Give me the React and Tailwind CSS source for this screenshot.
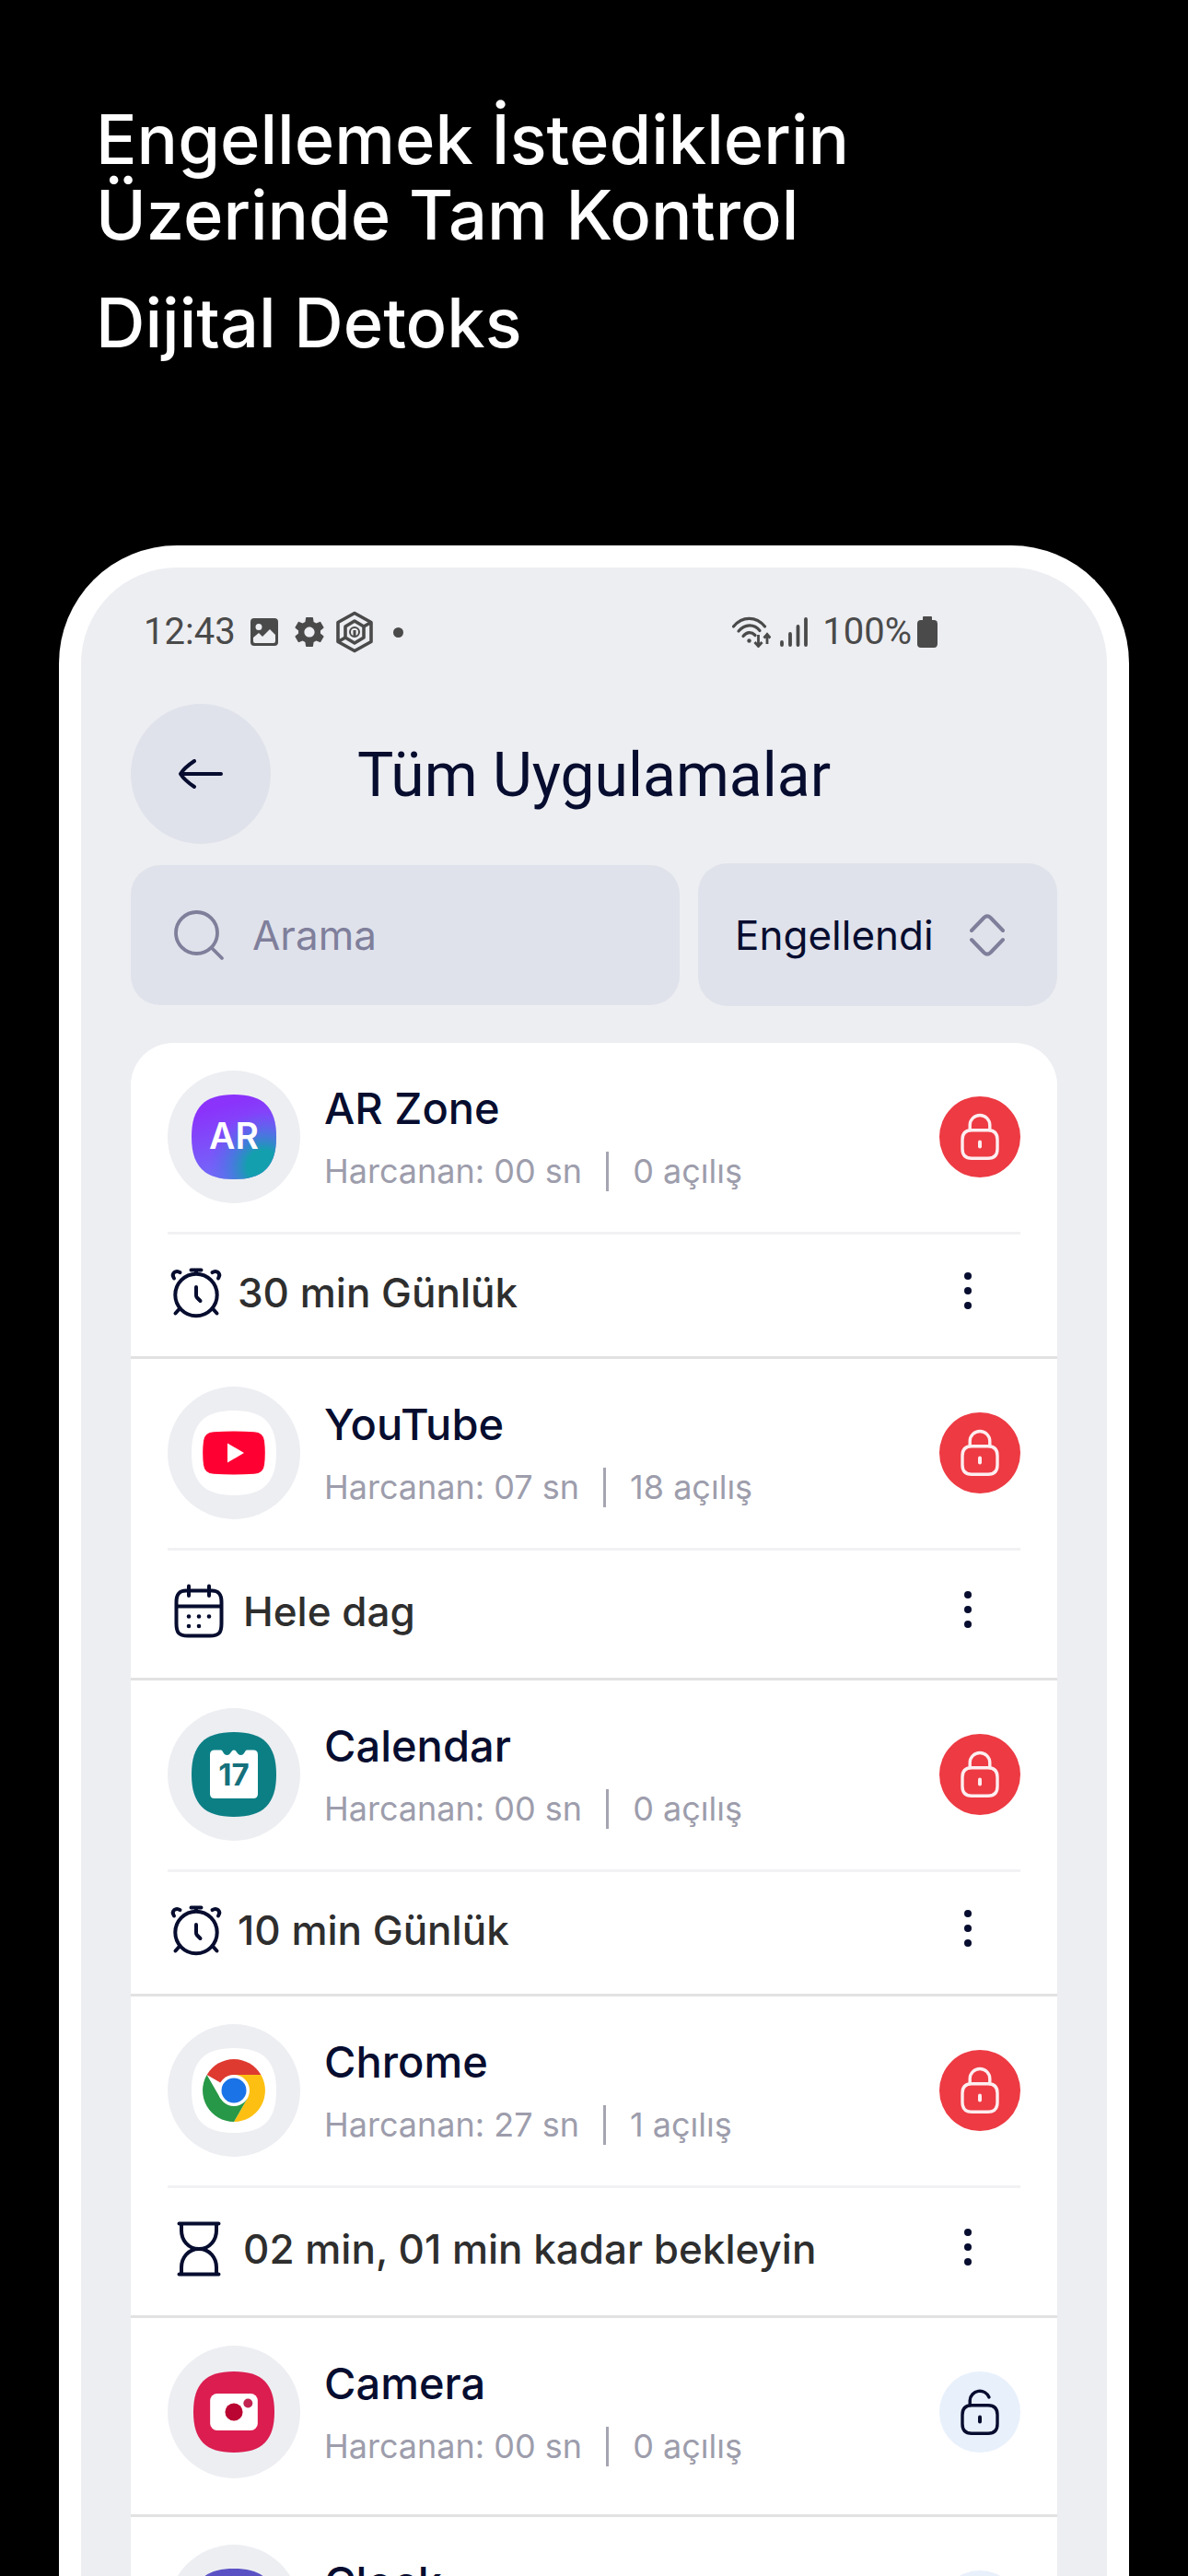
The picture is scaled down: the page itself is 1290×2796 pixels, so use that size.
import React, { useState } from 'react';

const SQUIRCLE = 'M46 0C78 0 92 14 92 46S78 92 46 92 0 78 0 46 14 0 46 0Z';

function ArZoneIcon() {
  return (
    <svg viewBox="0 0 92 92" className="size-[92px]" aria-hidden="true">
      <defs>
        <linearGradient id="ar-base" x1="0.2" y1="0" x2="0.5" y2="1">
          <stop offset="0.15" stopColor="#8b32fb" />
          <stop offset="1" stopColor="#6f70f8" />
        </linearGradient>
        <radialGradient id="ar-teal" cx="0.85" cy="0.85" r="0.65">
          <stop offset="0.3" stopColor="#149fae" />
          <stop offset="0.6" stopColor="#3a80d8" stopOpacity="0.7" />
          <stop offset="1" stopColor="#5a60f0" stopOpacity="0" />
        </radialGradient>
      </defs>
      <path d={SQUIRCLE} fill="url(#ar-base)" />
      <path d={SQUIRCLE} fill="url(#ar-teal)" />
      <text
        x="46"
        y="59"
        textAnchor="middle"
        fill="#fff"
        className="font-['Inter',sans-serif] text-[39px] font-semibold"
      >
        AR
      </text>
    </svg>
  );
}

function YoutubeIcon() {
  return (
    <svg viewBox="0 0 92 92" className="size-[92px]" aria-hidden="true">
      <path d={SQUIRCLE} fill="#fff" />
      <path
        d="M24 23.2Q46 21.6 68 23.2Q78 23.8 79 33Q80.600 46 79 59Q78 68.200 68 68.800Q46 70.400 24 68.800Q14 68.200 13 59Q11.400 46 13 33Q14 23.800 24 23.200Z"
        fill="#ff0033"
      />
      <path d="M39 35.500L57 46L39 56.500Z" fill="#fff" />
    </svg>
  );
}

function CalendarAppIcon() {
  return (
    <svg viewBox="0 0 92 92" className="size-[92px]" aria-hidden="true">
      <path d={SQUIRCLE} fill="#0c7f85" />
      <path
        d="M25 19.500H32C34 19.500 34.500 25 38.500 25S43 19.500 46 19.500S49.500 25 53.500 25S58 19.500 60 19.500H67Q72 19.500 72 24.500V67Q72 72 67 72H25Q20 72 20 67V24.500Q20 19.500 25 19.500Z"
        fill="#fff"
      />
      <text
        x="46"
        y="58"
        textAnchor="middle"
        fill="#15707c"
        className="font-['Inter',sans-serif] text-[33px] font-bold"
      >
        17
      </text>
    </svg>
  );
}

function ChromeIcon() {
  return (
    <svg viewBox="0 0 92 92" className="size-[92px]" aria-hidden="true">
      <path d={SQUIRCLE} fill="#fff" />
      <path d="M46 46L16.600 29A34 34 0 0 1 75.400 29Z" fill="#de3a30" />
      <path d="M46 29H75.400A34 34 0 0 1 46 80L60.700 54.500Z" fill="#fdc012" />
      <path d="M31.300 54.500L16.600 29A34 34 0 0 0 46 80L60.700 54.500Z" fill="#279847" />
      <circle cx="46" cy="46" r="17" fill="#fff" />
      <circle cx="46" cy="46" r="13.500" fill="#1b73e8" />
    </svg>
  );
}

function CameraIcon() {
  return (
    <svg viewBox="0 0 92 92" className="size-[88px]" aria-hidden="true">
      <path d={SQUIRCLE} fill="#db1d50" />
      <rect x="19" y="25" width="54" height="42" rx="8" fill="#fff" />
      <circle cx="46" cy="46" r="10" fill="#ba0431" />
      <circle cx="62" cy="36" r="5.200" fill="#c22350" />
    </svg>
  );
}

function ClockAppIcon() {
  return (
    <svg viewBox="0 0 92 92" className="size-[92px]" aria-hidden="true">
      <path d={SQUIRCLE} fill="#5a52c4" />
      <circle cx="46" cy="46" r="24" fill="#fff" />
      <path d="M46 32V46L55 52" fill="none" stroke="#5a52c4" strokeWidth="5" strokeLinecap="round" />
    </svg>
  );
}

function AlarmIcon() {
  return (
    <svg
      viewBox="0 0 54 54"
      className="size-[54px] overflow-visible"
      fill="none"
      stroke="currentColor"
      strokeWidth="4"
      strokeLinecap="round"
      strokeLinejoin="round"
      aria-hidden="true"
    >
      <circle cx="27" cy="29.500" r="22.700" />
      <path d="M27 21V30Q27 31.500 28 32.500L31.500 36" />
      <path d="M21.500 2.500H32.500M27 2.500V6" />
      <path d="M3 11.500C-0.500 6 5 2 9.500 5.200" />
      <path d="M51 11.500C54.500 6 49 2 44.500 5.200" />
      <path d="M8.500 45L4.500 49.500M45.500 45L49.500 49.500" />
    </svg>
  );
}

function ScheduleIcon() {
  return (
    <svg viewBox="0 0 60 60" className="size-[60px]" fill="none" stroke="currentColor" aria-hidden="true">
      <path
        d="M16 7.500H44C52 7.500 54.500 12 54.500 20V43C54.500 53 52 56.500 42 56.500H18C8 56.500 5.500 53 5.500 43V20C5.500 12 8 7.500 16 7.500Z"
        strokeWidth="4"
      />
      <path d="M5.500 24.500H54.500" strokeWidth="4" />
      <path d="M19 2.500V13M41 2.500V13" strokeWidth="4" strokeLinecap="round" />
      <path d="M19 35.500h.01M30 35.500h.01M41 35.500h.01M19 46h.01M30 46h.01" strokeWidth="4.600" strokeLinecap="round" />
    </svg>
  );
}

function HourglassIcon() {
  return (
    <svg
      viewBox="0 0 60 60"
      className="size-[60px]"
      fill="none"
      stroke="currentColor"
      strokeWidth="4"
      strokeLinecap="round"
      aria-hidden="true"
    >
      <path d="M8.500 2.500H51.500M8.500 57.500H51.500" />
      <path d="M11 3V10C11 20 18 30 30 30S49 20 49 10V3" />
      <path d="M11 57V50C11 40 18 30 30 30S49 40 49 50V57" />
    </svg>
  );
}

function LockIcon({ open }) {
  return (
    <svg
      viewBox="0 0 88 88"
      className="size-[88px]"
      fill="none"
      stroke="currentColor"
      strokeWidth="3.400"
      strokeLinecap="round"
      aria-hidden="true"
    >
      <path d="M35 36.800H53C60 36.800 63 41 63 47V57C63 63.500 60 67.200 53 67.200H35C28 67.200 25 63.500 25 57V47C25 41 28 36.800 35 36.800Z" />
      {open ? (
        <path d="M33.200 36.500V31.300A10.800 10.800 0 0 1 54 28" />
      ) : (
        <path d="M33.200 36.500V31.300A10.800 10.800 0 0 1 54.800 31.300V36.500" />
      )}
      <path d="M44 49.500V54.500" strokeWidth="4" />
    </svg>
  );
}

function StatusBar() {
  return (
    <div className="flex h-12 items-center justify-between pr-[130px] pl-3.5 font-['Roboto',sans-serif] text-[40px] leading-[48px] text-[#4a4a4a]">
      <div className="flex items-center">
        <span>12:43</span>
        <svg viewBox="0 0 30 30" className="ml-4 size-[30px]" aria-hidden="true">
          <path
            fillRule="evenodd"
            fill="currentColor"
            d="M4 0H26Q30 0 30 4V26Q30 30 26 30H4Q0 30 0 26V4Q0 0 4 0ZM3 21V25Q3 27 5 27H25Q27 27 27 25V18L21 12L13 20L9 16ZM9 6A3.500 3.500 0 1 0 9 13A3.500 3.500 0 1 0 9 6Z"
          />
        </svg>
        <svg viewBox="2 2 20 20" className="ml-[18px] size-8" aria-hidden="true">
          <path
            fill="currentColor"
            d="M19.430 12.980c.04-.32.07-.64.07-.98s-.03-.66-.07-.98l2.110-1.650c.19-.15.24-.42.12-.64l-2-3.460c-.12-.22-.39-.3-.61-.22l-2.490 1c-.52-.4-1.080-.73-1.690-.98l-.38-2.650C14.460 2.180 14.250 2 14 2h-4c-.25 0-.46.18-.49.42l-.38 2.650c-.61.25-1.170.59-1.690.98l-2.490-1c-.23-.09-.49 0-.61.22l-2 3.460c-.13.22-.07.49.12.64l2.110 1.650c-.04.32-.07.65-.07.98s.03.66.07.98l-2.110 1.650c-.19.15-.24.42-.12.64l2 3.460c.12.22.39.3.61.22l2.490-1c.52.4 1.080.73 1.690.98l.38 2.650c.03.24.24.42.49.42h4c.25 0 .46-.18.49-.42l.38-2.650c.61-.25 1.170-.59 1.690-.98l2.490 1c.23.09.49 0 .61-.22l2-3.460c.12-.22.07-.49-.12-.64l-2.110-1.650zM12 15.500c-1.930 0-3.500-1.570-3.500-3.500s1.570-3.500 3.500-3.500 3.500 1.570 3.500 3.500-1.570 3.500-3.500 3.500z"
          />
        </svg>
        <svg
          viewBox="0 0 40 46"
          className="ml-[13px] h-[46px] w-10"
          fill="none"
          stroke="currentColor"
          strokeWidth="3.600"
          strokeLinejoin="round"
          aria-hidden="true"
        >
          <path d="M20 2.500L38 12.500V33.500L20 43.500L2 33.500V12.500Z" />
          <path d="M20 11L30 17V29L20 35L10 29V17Z" />
          <path d="M30 17L37 13M10 29L3 33" />
          <circle cx="20" cy="23" r="5" strokeWidth="2" />
          <path d="M20 21V27" strokeWidth="3" />
        </svg>
        <span className="ml-[22px] size-[11px] rounded-full bg-[#4a4a4a]" />
      </div>

      <div className="flex items-center">
        <svg viewBox="0 0 42 34" className="h-[34px] w-[42px]" fill="none" stroke="currentColor" strokeWidth="3.200" aria-hidden="true">
          <path d="M1.500 11C11 -0.500 26 -0.500 35.500 11" strokeLinecap="round" />
          <path d="M7 16C14 8 24 8 30 15.500" strokeLinecap="round" />
          <path d="M12 21.500C16 16.500 21 16.500 25 20.500" strokeLinecap="round" />
          <circle cx="18.500" cy="26.500" r="2.200" fill="currentColor" stroke="none" />
          <path d="M28.500 20V32M24.500 28L28.500 32.500L32.500 28M38 30V20M34.500 23.500L38 19.500L41.500 23.500" strokeWidth="2.800" />
        </svg>
        <svg viewBox="0 0 30 32" className="ml-[10px] h-8 w-[30px]" stroke="currentColor" strokeWidth="3.800" strokeLinecap="round" aria-hidden="true">
          <path d="M2 27V30M11 18V30M19.500 10V30M28 2V30" />
        </svg>
        <span className="ml-4">100%</span>
        <svg viewBox="0 0 22 34" className="ml-1.5 h-[34px] w-[22px]" aria-hidden="true">
          <path
            fill="currentColor"
            d="M7 0H15Q16 0 16 1V4H18Q22 4 22 8V30Q22 34 18 34H4Q0 34 0 30V8Q0 4 4 4H6V1Q6 0 7 0Z"
          />
        </svg>
      </div>
    </div>
  );
}

function AppRow({ app }) {
  const Icon = app.icon;
  const LimitIcon = app.limitIcon;

  return (
    <li className="border-b-[3px] border-[#e2e2e2] px-10 pt-[30px]">
      <div className={app.limit ? 'flex items-center pb-[31px]' : 'flex items-center pb-[39px]'}>
        <div className="flex size-36 shrink-0 items-center justify-center rounded-full bg-[#edeef2]">
          <Icon />
        </div>
        <div className="ml-[26px] flex grow flex-col gap-[18px]">
          <h2 className="text-[47px] leading-[56px] font-medium text-[#070d2f]">{app.name}</h2>
          <p className="flex items-center text-[36px] leading-[44px] text-[#9d9dac]">
            <span>Harcanan: {app.spent} sn</span>
            <span className="mx-[26px] h-[43px] w-[3px] bg-[#a5a5b2]" />
            <span>{app.opens} açılış</span>
          </p>
        </div>
        <button
          type="button"
          aria-label={app.locked ? 'Engeli kaldır' : 'Engelle'}
          className={
            app.locked
              ? 'shrink-0 rounded-full bg-[#ed3a43] text-[#fdeef0]'
              : 'shrink-0 rounded-full bg-[#e8f0fb] text-[#070d2f]'
          }
        >
          <LockIcon open={!app.locked} />
        </button>
      </div>

      {app.limit && (
        <div className="flex items-center border-t-[3px] border-[#f2f2f4] pt-9 pr-[53px] pb-[42px] pl-1 text-[#070d2f]">
          <LimitIcon />
          <span className="ml-[18px] grow text-[44px] leading-[54px] font-medium text-[#2e2e2e]">{app.limit}</span>
          <button type="button" aria-label="Seçenekler" className="flex flex-col gap-2 pb-1">
            <span className="size-2 rounded-full bg-[#070d2f]" />
            <span className="size-2 rounded-full bg-[#070d2f]" />
            <span className="size-2 rounded-full bg-[#070d2f]" />
          </button>
        </div>
      )}
    </li>
  );
}

const apps = [
  { name: 'AR Zone', spent: '00', opens: 0, locked: true, icon: ArZoneIcon, limit: '30 min Günlük', limitIcon: AlarmIcon },
  { name: 'YouTube', spent: '07', opens: 18, locked: true, icon: YoutubeIcon, limit: 'Hele dag', limitIcon: ScheduleIcon },
  { name: 'Calendar', spent: '00', opens: 0, locked: true, icon: CalendarAppIcon, limit: '10 min Günlük', limitIcon: AlarmIcon },
  { name: 'Chrome', spent: '27', opens: 1, locked: true, icon: ChromeIcon, limit: '02 min, 01 min kadar bekleyin', limitIcon: HourglassIcon },
  { name: 'Camera', spent: '00', opens: 0, locked: false, icon: CameraIcon },
  { name: 'Clock', spent: '00', opens: 0, locked: false, icon: ClockAppIcon },
];

export default function App() {
  const [query, setQuery] = useState('');

  return (
    <div className="h-screen overflow-hidden bg-black font-['Inter',sans-serif]">
      <header className="px-[104px] pt-[110px] pb-[201px] text-[74px] leading-[82px] font-medium text-white">
        <h1>
          Engellemek İstediklerin
          <br />
          Üzerinde Tam Kontrol
        </h1>
        <p className="mt-[35px]">Dijital Detoks</p>
      </header>

      <main className="mx-16 rounded-t-[128px] border-x-[24px] border-t-[24px] border-white bg-[#edeef2] px-[54px] pt-[46px]">
        <StatusBar />

        <div className="mt-[54px] grid grid-cols-[152px_1fr_152px] items-center">
          <button
            type="button"
            aria-label="Geri"
            className="flex size-[152px] items-center justify-center rounded-full bg-[#e0e2eb] text-[#070d2f]"
          >
            <svg
              viewBox="0 0 50 32"
              className="h-8 w-[50px]"
              fill="none"
              stroke="currentColor"
              strokeWidth="4"
              strokeLinecap="round"
              strokeLinejoin="round"
              aria-hidden="true"
            >
              <path d="M47 16H3M18 2C12 6 6 11 3 16C6 21 12 26 18 30" />
            </svg>
          </button>
          <h2 className="pt-1 text-center font-['Roboto',sans-serif] text-[66px] leading-[76px] text-[#070d2f]">
            Tüm Uygulamalar
          </h2>
        </div>

        <div className="mt-[21px] flex items-center gap-5">
          <label className="flex h-[152px] min-w-0 grow items-center gap-[30px] rounded-[32px] bg-[#e0e2eb] px-[46px] text-[#7f7f9b]">
            <svg
              viewBox="0 0 56 56"
              className="size-14 shrink-0"
              fill="none"
              stroke="currentColor"
              strokeWidth="3.800"
              strokeLinecap="round"
              aria-hidden="true"
            >
              <circle cx="25.500" cy="25.500" r="22.500" />
              <path d="M42 42L53 53" />
            </svg>
            <input
              type="text"
              aria-label="Arama"
              placeholder="Arama"
              value={query}
              onChange={(e) => setQuery(e.target.value)}
              className="w-full min-w-0 bg-transparent text-[44px] leading-[54px] outline-none placeholder:text-[#7f7f9b]"
            />
          </label>
          <div className="relative w-[390px] shrink-0">
            <select
              aria-label="Filtre"
              className="h-[155px] w-full appearance-none rounded-[32px] bg-[#e0e2eb] pl-10 text-[44px] text-[#070d2f]"
            >
              <option>Engellendi</option>
            </select>
            <svg
              viewBox="0 0 38 46"
              className="pointer-events-none absolute top-[55px] right-[57px] h-[46px] w-[38px]"
              fill="none"
              stroke="#7f7f9b"
              strokeWidth="4"
              strokeLinecap="round"
              strokeLinejoin="round"
              aria-hidden="true"
            >
              <path d="M2 18L15.500 4Q19 0.800 22.500 4L36 18" />
              <path d="M2 28L15.500 42Q19 45.200 22.500 42L36 28" />
            </svg>
          </div>
        </div>

        <ul className="mt-10 rounded-t-[46px] bg-white">
          {apps.map((app) => (
            <AppRow key={app.name} app={app} />
          ))}
        </ul>
      </main>
    </div>
  );
}
